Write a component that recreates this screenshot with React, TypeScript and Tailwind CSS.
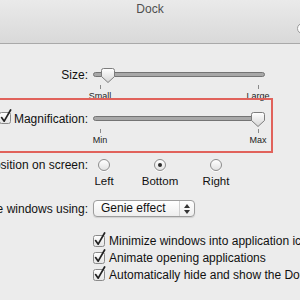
import React from 'react';

const font = "font-['Liberation_Sans',Arial,sans-serif]";

function Thumb() {
  return (
    <svg width="14" height="15" viewBox="0 0 14 15">
      <defs>
        <linearGradient id="thumbFill" x1="0" y1="0" x2="0" y2="1">
          <stop offset="0" stopColor="#ffffff" />
          <stop offset="1" stopColor="#d6d6d6" />
        </linearGradient>
      </defs>
      <path
        d="M2.5 0.5 H11.5 Q13.5 0.5 13.5 2.5 V8.5 L7 14.5 L0.5 8.5 V2.5 Q0.5 0.5 2.5 0.5 Z"
        fill="url(#thumbFill)"
        stroke="#7d7d7d"
      />
    </svg>
  );
}

function Slider({ value, low, high }: { value: number; low: string; high: string }) {
  // value: thumb offset in px from the left end of the track
  return (
    <div className="flex flex-col w-[172px]">
      <div className="relative h-[15px]">
        <div className="absolute left-0 right-0 top-[4px] h-[5px] rounded-full bg-[#a8a8a8] border border-[#747474]" />
        <div className="absolute top-0" style={{ left: value }}>
          <Thumb />
        </div>
      </div>
      <div className="flex justify-between">
        {[low, high].map(label => (
          <div key={label} className="w-[14px] flex flex-col items-center">
            <div className="mt-[2px] h-[4px] w-px bg-[#8a8a8a]" />
            <div className="mt-[2px] leading-[10px] text-[9px] text-[#222] whitespace-nowrap">{label}</div>
          </div>
        ))}
      </div>
    </div>
  );
}

function Check() {
  return (
    <svg width="13" height="15" viewBox="0 0 13 15" className="shrink-0">
      <defs>
        <linearGradient id="boxFill" x1="0" y1="0" x2="0" y2="1">
          <stop offset="0" stopColor="#ffffff" />
          <stop offset="1" stopColor="#e4e4e4" />
        </linearGradient>
      </defs>
      <rect x="0.5" y="3.5" width="11" height="11" rx="2" fill="url(#boxFill)" stroke="#8a8a8a" />
      <path d="M2.6 8.6 L5.2 12.2 L11.6 1" fill="none" stroke="#222" strokeWidth="1.7" strokeLinecap="round" strokeLinejoin="round" />
    </svg>
  );
}

function Radio({ on }: { on?: boolean }) {
  return (
    <div className="w-[12px] h-[12px] rounded-full border border-[#8c8c8c] bg-gradient-to-b from-white to-[#e2e2e2] flex items-center justify-center shadow-[0_1px_0_rgba(255,255,255,0.8)]">
      {on && <div className="w-[4px] h-[4px] rounded-full bg-[#2a2a2a]" />}
    </div>
  );
}

function Label({ children, h }: { children: React.ReactNode; h: string }) {
  return (
    <div className={`w-[88px] shrink-0 flex justify-end items-center whitespace-nowrap ${h}`}>
      {children}
    </div>
  );
}

export default function App() {
  const positions = [
    { name: 'Left', on: false },
    { name: 'Bottom', on: true },
    { name: 'Right', on: false },
  ];
  const options = [
    'Minimize windows into application icon',
    'Animate opening applications',
    'Automatically hide and show the Dock',
  ];

  return (
    <div className={`w-[300px] h-[300px] overflow-hidden bg-[#ececec] text-[12px] text-[#111] ${font}`}>
      {/* Title bar and toolbar */}
      <div className="h-[44px] border-b border-[#a9a9a9] bg-gradient-to-b from-[#eaeaea] to-[#d9d9d9] flex flex-col">
        <div className="pt-[2px] leading-[14px] text-center text-[#4f4f4f]">Dock</div>
        <div className="mt-[7px] flex">
          <div className="ml-[297px] w-[60px] h-[11px] rounded-full border border-[#9a9a9a] bg-white shrink-0" />
        </div>
      </div>

      {/* Size */}
      <div className="mt-[24px] flex items-start">
        <Label h="h-[13px]">Size:</Label>
        <div className="ml-[5px]">
          <Slider value={8} low="Small" high="Large" />
        </div>
      </div>

      {/* Magnification, boxed in red */}
      <div className="relative -mt-[3px] -ml-[4px] w-[277px] border-2 border-[#e1625b] pt-[12px] pb-[6px]">
        <div className="flex items-start">
          <div className="w-[90px] shrink-0 h-[13px] flex items-center justify-end gap-[2px] whitespace-nowrap">
            <div className="-mt-[4px]">
              <Check />
            </div>
            <span>Magnification:</span>
          </div>
          <div className="ml-[5px]">
            <Slider value={158} low="Min" high="Max" />
          </div>
        </div>
      </div>

      {/* Position on screen */}
      <div className="mt-[6px] flex items-start">
        <Label h="h-[11px]">Position on screen:</Label>
        <div className="ml-[5px] flex gap-[34px]">
          {positions.map(p => (
            <div key={p.name} className="w-[22px] flex flex-col items-center">
              <Radio on={p.on} />
              <div className="mt-[3px] leading-[14px] text-[11.5px] whitespace-nowrap">{p.name}</div>
            </div>
          ))}
        </div>
      </div>

      {/* Minimize using */}
      <div className="mt-[12px] flex items-center">
        <Label h="h-[17px]">Minimize windows using:</Label>
        <div className="ml-[5px] w-[102px] h-[17px] rounded-[4px] border border-[#9d9d9d] bg-gradient-to-b from-white to-[#eeeeee] shadow-[0_1px_1px_rgba(0,0,0,0.12)] flex items-center">
          <span className="pl-[7px] flex-1 leading-[15px]">Genie effect</span>
          <div className="w-px h-[15px] bg-[#d0d0d0]" />
          <div className="w-[14px] flex flex-col items-center gap-[2px]">
            <svg width="6" height="4" viewBox="0 0 6 4"><path d="M3 0 L6 4 H0 Z" fill="#333" /></svg>
            <svg width="6" height="4" viewBox="0 0 6 4"><path d="M0 0 H6 L3 4 Z" fill="#333" /></svg>
          </div>
        </div>
      </div>

      {/* Options */}
      <div className="mt-[15px] ml-[93px] flex flex-col">
        {options.map(o => (
          <div key={o} className="h-[17px] flex items-center gap-[3px] whitespace-nowrap">
            <div className="-mt-[3px]">
              <Check />
            </div>
            <span>{o}</span>
          </div>
        ))}
      </div>
    </div>
  );
}
